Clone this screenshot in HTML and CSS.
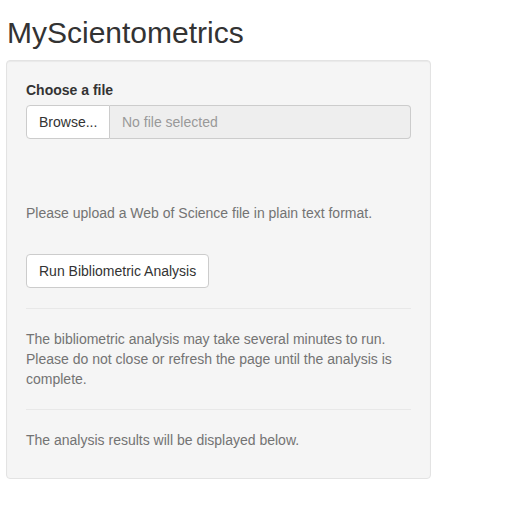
FILE: index.html
```html
<!DOCTYPE html>
<html>
<head>
<meta charset="utf-8">
<link rel="stylesheet" href="styles.css">
</head>
<body>
<h2 class="title">MyScientometrics</h2>
<div class="well">
  <label class="label">Choose a file</label>
  <div class="input-group">
    <span class="btn btn-browse">Browse...</span>
    <span class="file-name">No file selected</span>
  </div>
  <div class="progress-space"></div>
  <p class="help">Please upload a Web of Science file in plain text format.</p>
  <button class="btn btn-run">Run Bibliometric Analysis</button>
  <hr class="sep">
  <p class="help">The bibliometric analysis may take several minutes to run. Please do not close or refresh the page until the analysis is complete.</p>
  <hr class="sep">
  <p class="help last">The analysis results will be displayed below.</p>
</div>
</body>
</html>
```
FILE: styles.css
```css
* { box-sizing: border-box; }
html, body { margin: 0; padding: 0; background: #fff; }
body {
  font-family: "Liberation Sans", Arial, Helvetica, sans-serif;
  font-size: 14px;
  line-height: 20px;
  color: #333;
  padding: 0 6px;
  width: 437px;
}
.title {
  font-size: 30px;
  font-weight: 500;
  line-height: 33px;
  margin: 16px 0 11px 1px;
  color: #333;
}
.well {
  background: #f5f5f5;
  border: 1px solid #e3e3e3;
  border-radius: 4px;
  padding: 19px;
  box-shadow: inset 0 1px 1px rgba(0,0,0,0.05);
  width: 425px;
}
.label {
  display: block;
  font-weight: bold;
  margin-bottom: 5px;
}
.input-group {
  display: flex;
  height: 34px;
}
.btn {
  display: inline-block;
  font-family: inherit;
  font-size: 14px;
  line-height: 20px;
  padding: 6px 12px;
  background: #fff;
  border: 1px solid #ccc;
  border-radius: 4px;
  color: #333;
  white-space: nowrap;
}
.btn-browse {
  width: 84px;
  border-radius: 4px 0 0 4px;
  height: 34px;
}
.file-name {
  flex: 1;
  height: 34px;
  background: #eee;
  border: 1px solid #ccc;
  border-left: none;
  border-radius: 0 4px 4px 0;
  padding: 6px 12px;
  color: #999;
}
.progress-space { height: 64px; }
.help {
  color: #737373;
  margin: 0 0 10px;
}
.btn-run {
  margin-top: 21px;
  height: 34px;
  vertical-align: top;
}
.sep {
  border: 0;
  border-top: 1px solid #e8e8e8;
  margin: 20px 0;
}
.last { margin-bottom: 9px; }
```
